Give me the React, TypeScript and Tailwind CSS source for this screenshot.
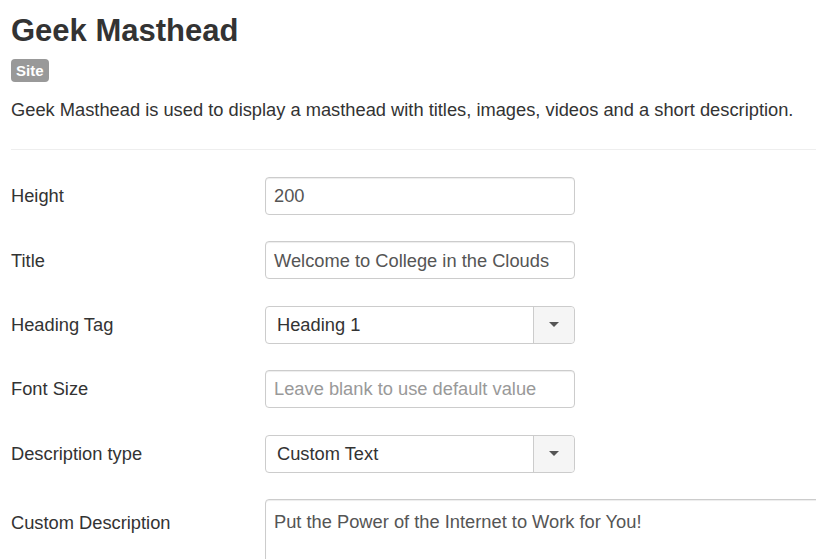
import React from "react";

const font = { fontFamily: '"Liberation Sans", Arial, sans-serif' };

function Caret() {
  return (
    <svg width="10" height="6" viewBox="0 0 10 6">
      <path d="M0 0 L10 0 L5 5 Z" fill="#555" />
    </svg>
  );
}

function Row({ label, children }: { label: string; children: React.ReactNode }) {
  return (
    <div className="flex items-center h-[38px] mb-[26.4px]">
      <div className="w-[254px] shrink-0 text-[18.3px] text-[#333]">{label}</div>
      {children}
    </div>
  );
}

function Input({ value, placeholder }: { value?: string; placeholder?: string }) {
  return (
    <div className="w-[310px] h-[38px] border border-[#ccc] rounded-[4px] bg-white flex items-center px-[8px] shadow-[inset_0_1px_1px_rgba(0,0,0,0.075)] text-[18.3px]">
      {value ? <span className="text-[#555]">{value}</span> : <span className="text-[#999]">{placeholder}</span>}
    </div>
  );
}

function Select({ value }: { value: string }) {
  return (
    <div className="w-[310px] h-[38px] border border-[#ccc] rounded-[4px] bg-white flex items-stretch text-[18.3px]">
      <div className="flex-1 flex items-center px-[11px] text-[#333]">{value}</div>
      <div className="w-[41px] border-l border-[#ccc] bg-[#f5f5f5] rounded-r-[4px] flex items-center justify-center">
        <Caret />
      </div>
    </div>
  );
}

export default function App() {
  return (
    <div className="w-[816px] h-[559px] overflow-hidden bg-white pl-[11px]" style={font}>
      <h1 className="text-[31px] font-bold text-[#333] leading-none pt-[15px]">Geek Masthead</h1>
      <div className="mt-[13px] flex">
        <div className="h-[23px] px-[5px] rounded-[4px] bg-[#999] text-white font-bold text-[15px] leading-[23px]">Site</div>
      </div>
      <p className="mt-[16px] text-[18.3px] text-[#333] leading-[24px]">
        Geek Masthead is used to display a masthead with titles, images, videos and a short description.
      </p>
      <div className="mt-[27px] border-t border-[#eee]" />
      <div className="pt-[27px]">
        <Row label="Height"><Input value="200" /></Row>
        <Row label="Title"><Input value="Welcome to College in the Clouds" /></Row>
        <Row label="Heading Tag"><Select value="Heading 1" /></Row>
        <Row label="Font Size"><Input placeholder="Leave blank to use default value" /></Row>
        <Row label="Description type"><Select value="Custom Text" /></Row>
        <div className="flex items-start">
          <div className="w-[254px] shrink-0 text-[18.3px] text-[#333] pt-[10px]">Custom Description</div>
          <div className="w-[600px] h-[120px] shrink-0 border border-[#ccc] rounded-[4px] bg-white px-[8px] pt-[8px] text-[18.3px] text-[#555] shadow-[inset_0_1px_1px_rgba(0,0,0,0.075)]">
            Put the Power of the Internet to Work for You!
          </div>
        </div>
      </div>
    </div>
  );
}
